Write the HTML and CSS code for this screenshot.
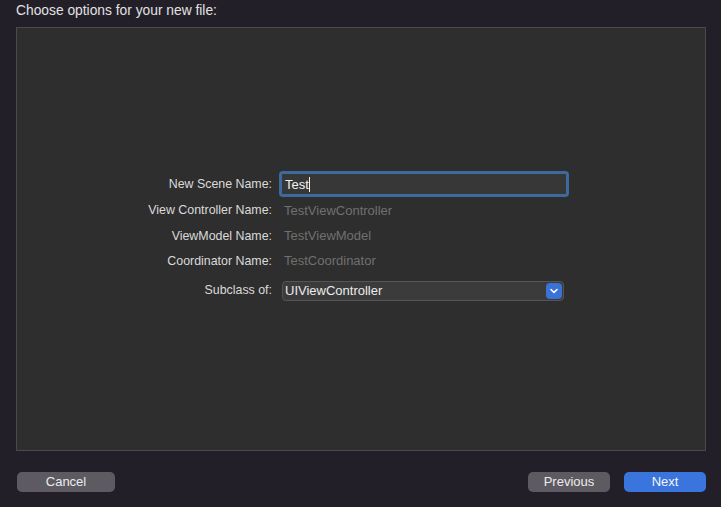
FILE: index.html
```html
<!DOCTYPE html>
<html>
<head>
<meta charset="utf-8">
<link rel="stylesheet" href="styles.css">
</head>
<body>
<div class="sheet">
  <div class="title">Choose options for your new file:</div>
  <div class="panel">
    <div class="form">
      <div class="label">New Scene Name:</div>
      <div class="field"><div class="input"><span>Test</span><span class="caret"></span></div></div>

      <div class="label">View Controller Name:</div>
      <div class="value">TestViewController</div>

      <div class="label">ViewModel Name:</div>
      <div class="value">TestViewModel</div>

      <div class="label">Coordinator Name:</div>
      <div class="value">TestCoordinator</div>

      <div class="label sub">Subclass of:</div>
      <div class="popup sub">
        <span class="ptext">UIViewController</span>
        <span class="chev"><svg width="10" height="8" viewBox="0 0 10 8"><path d="M2 2.5 L5 5.5 L8 2.5" fill="none" stroke="#fff" stroke-width="1.6" stroke-linecap="round" stroke-linejoin="round"/></svg></span>
      </div>
    </div>
  </div>
  <div class="buttons">
    <button class="btn cancel">Cancel</button>
    <div class="right">
      <button class="btn prev">Previous</button>
      <button class="btn next">Next</button>
    </div>
  </div>
</div>
</body>
</html>
```

FILE: styles.css
```css
html, body {
  margin: 0;
  padding: 0;
}
body {
  background: #231f28;
  width: 721px;
  height: 507px;
  overflow: hidden;
  font-family: "Liberation Sans", Arial, sans-serif;
  font-size: 13px;
  color: #dcdcdc;
}
.sheet {
  display: flex;
  flex-direction: column;
  padding: 0 15px 0 16px;
}
.title {
  height: 27px;
  line-height: 21px;
  color: #e2e2e2;
  font-size: 13.8px;
}
.panel {
  box-sizing: border-box;
  height: 424px;
  width: 690px;
  background: #2e2e2e;
  border: 1px solid #4a4a4a;
  padding-top: 143px;
}
.form {
  display: grid;
  grid-template-columns: 255px 290px;
  grid-template-rows: 26px 26px 25px 25px 28px;
  column-gap: 7px;
  align-items: center;
}
.label {
  text-align: right;
  color: #dadada;
  font-size: 12.4px;
}
.value {
  padding-left: 5px;
  color: #707070;
}
.field {
  box-sizing: border-box;
  height: 26px;
  border-radius: 4px;
  background: #3d6a9e;
  padding: 3px;
}
.input {
  box-sizing: border-box;
  height: 20px;
  background: #373737;
  padding-left: 3px;
  display: flex;
  align-items: center;
  color: #f2f2f2;
}
.caret {
  display: inline-block;
  width: 1px;
  height: 15px;
  background: #f0f0f0;
}
.sub {
  align-self: end;
}
.label.sub {
  line-height: 18px;
  padding-bottom: 2px;
}
.popup {
  box-sizing: border-box;
  height: 20px;
  width: 282px;
  margin-left: 3px;
  background: #3b3b3b;
  border: 1px solid #555;
  border-radius: 4px;
  display: flex;
  align-items: center;
  justify-content: space-between;
  padding: 0 1px 0 2px;
  color: #ececec;
}
.ptext {
  margin-top: -2px;
}
.chev {
  width: 16px;
  height: 16px;
  border-radius: 4px;
  background: #3a72d8;
  display: flex;
  align-items: center;
  justify-content: center;
}
.buttons {
  display: flex;
  justify-content: space-between;
  margin-top: 21px;
}
.right {
  display: flex;
  gap: 14px;
}
.btn {
  font-family: "Liberation Sans", Arial, sans-serif;
  font-size: 13px;
  height: 20px;
  line-height: 19px;
  padding: 0 0 1px 0;
  border: none;
  border-radius: 5px;
  color: #ececec;
  margin: 0;
}
.cancel {
  margin-left: 1px;
  width: 98px;
  background: #5e5a62;
}
.prev {
  width: 82px;
  background: #5e5a62;
}
.next {
  width: 82px;
  background: #3a75dd;
  color: #f4f4f4;
}
```
